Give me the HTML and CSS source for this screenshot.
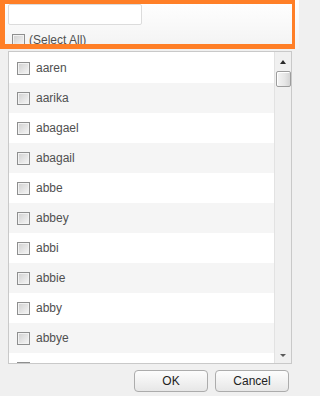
FILE: index.html
```html
<!DOCTYPE html>
<html>
<head>
<meta charset="utf-8">
<link rel="stylesheet" href="styles.css">
</head>
<body>
<div class="head">
  <div class="mark">
    <input class="search" type="text">
    <label class="all"><span class="cb"></span>(Select All)</label>
  </div>
</div>
<div class="list">
  <div class="rows">
    <div class="row"><span class="cb"></span>aaren</div>
    <div class="row"><span class="cb"></span>aarika</div>
    <div class="row"><span class="cb"></span>abagael</div>
    <div class="row"><span class="cb"></span>abagail</div>
    <div class="row"><span class="cb"></span>abbe</div>
    <div class="row"><span class="cb"></span>abbey</div>
    <div class="row"><span class="cb"></span>abbi</div>
    <div class="row"><span class="cb"></span>abbie</div>
    <div class="row"><span class="cb"></span>abby</div>
    <div class="row"><span class="cb"></span>abbye</div>
    <div class="row"><span class="cb"></span></div>
  </div>
  <div class="sb">
    <div class="arr up"></div>
    <div class="thumb"></div>
    <div class="track"></div>
    <div class="arr down"></div>
  </div>
</div>
<div class="btns">
  <button class="btn">OK</button>
  <button class="btn">Cancel</button>
</div>
</body>
</html>
```
FILE: styles.css
```css
html, body {
  margin: 0;
  padding: 0;
  background: #f0f0f0;
  font-family: "Liberation Sans", Arial, sans-serif;
}
body {
  width: 299px;
  height: 396px;
  overflow: hidden;
}
.head {
  height: 49px;
  background: linear-gradient(#ffffff, #f3f3f3);
}
.mark {
  box-sizing: border-box;
  width: 295px;
  height: 49px;
  border-style: solid;
  border-color: #ff7f27;
  border-width: 4px 3px 5px 5px;
  overflow: hidden;
  padding-left: 3px;
}
.search {
  display: block;
  box-sizing: border-box;
  width: 134px;
  height: 21px;
  margin: 0;
  padding: 0;
  border: 1px solid #dcdcdc;
  border-radius: 2px;
  background: #fff;
}
.all {
  display: flex;
  align-items: center;
  gap: 4px;
  margin: 8px 0 0 4px;
  font-size: 12px;
  line-height: 14px;
  color: #505050;
}
.cb {
  display: block;
  flex: none;
  box-sizing: border-box;
  width: 13px;
  height: 13px;
  border: 1px solid #8e8f8f;
  background: linear-gradient(135deg, #cfcfcf, #f7f7f7);
  box-shadow: inset 0 0 0 1px #f2f2f2;
}
.list {
  box-sizing: border-box;
  margin: 2px 0 0 8px;
  width: 284px;
  height: 313px;
  border: 1px solid #c9c9c9;
  background: #fff;
  display: flex;
  overflow: hidden;
}
.rows {
  flex: 1;
  padding-top: 1px;
}
.row {
  height: 30px;
  display: flex;
  align-items: center;
  gap: 6px;
  padding-left: 8px;
  font-size: 12px;
  color: #505050;
}
.row:nth-child(even) {
  background: #f5f5f5;
}
.sb {
  box-sizing: border-box;
  width: 17px;
  flex: none;
  border-left: 1px solid #e2e2e2;
  background: #f0f0f0;
  display: flex;
  flex-direction: column;
  align-items: center;
}
.arr {
  width: 0;
  height: 0;
  border-left: 3px solid transparent;
  border-right: 3px solid transparent;
}
.up {
  margin-top: 8px;
  border-bottom: 4px solid #2a2a2a;
}
.down {
  margin-bottom: 6px;
  border-top: 3px solid #5a5a5a;
}
.thumb {
  box-sizing: border-box;
  width: 15px;
  height: 16px;
  margin-top: 7px;
  border: 1px solid #9c9c9c;
  border-radius: 2px;
  background: linear-gradient(90deg, #f4f4f4, #e6e6e6 60%, #d4d4d4);
  box-shadow: inset 1px 1px 0 #fff;
}
.track {
  flex: 1;
}
.btns {
  display: flex;
  justify-content: flex-end;
  gap: 7px;
  padding-right: 10px;
  margin-top: 6px;
}
.btn {
  box-sizing: border-box;
  width: 74px;
  height: 22px;
  padding: 0;
  border: 1px solid #acacac;
  border-radius: 4px;
  background: linear-gradient(#fdfdfd, #e7e7e7);
  font-family: "Liberation Sans", Arial, sans-serif;
  font-size: 12px;
  color: #222;
}
```
